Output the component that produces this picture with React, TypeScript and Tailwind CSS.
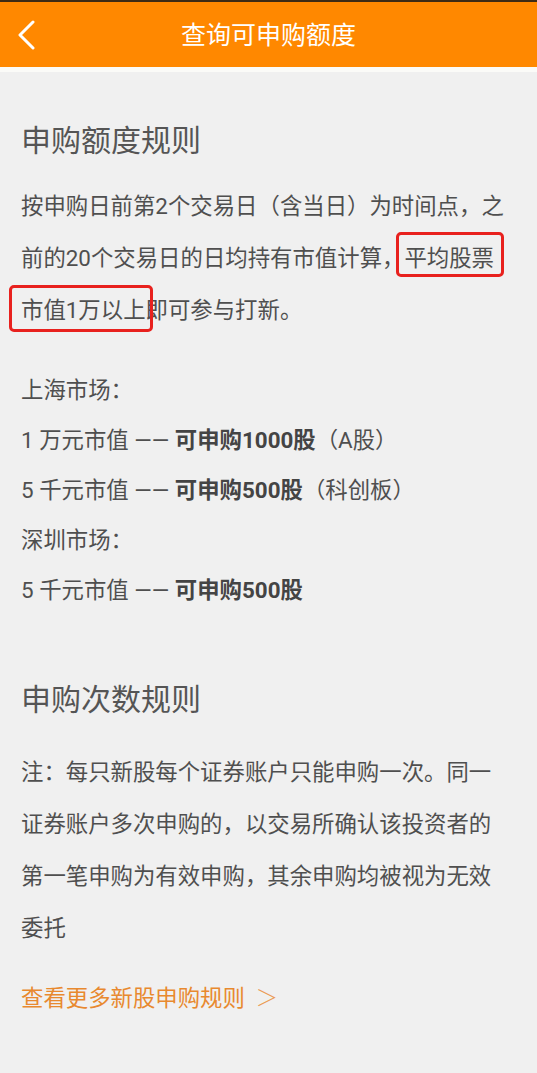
import React from 'react';

function Marked({ children, box }: { children: React.ReactNode; box: string }) {
  return (
    <span className="relative">
      {children}
      <span className={`pointer-events-none absolute rounded-[5px] border-[3px] border-[#e8211e] ${box}`} />
    </span>
  );
}

function BackIcon() {
  return (
    <svg width="18" height="30" viewBox="0 0 18 30" fill="none">
      <polyline points="16,2 3,15 16,28" stroke="#fff" strokeWidth="3" strokeLinecap="round" strokeLinejoin="round" />
    </svg>
  );
}

export default function App() {
  return (
    <div className="flex h-[1073px] flex-col bg-[#f0f0f0] font-[Roboto,'Noto_Sans_CJK_SC',sans-serif] text-[#4f4f4f]">
      <header className="grid h-[67px] shrink-0 grid-cols-[70px_1fr_70px] items-center border-t-2 border-[#3d2a14] bg-[#ff8800]">
        <button className="flex h-full items-center pl-[17px]">
          <BackIcon />
        </button>
        <h1 className="pt-[3px] text-center text-[25px] leading-[32px] text-white">查询可申购额度</h1>
        <div />
      </header>
      <div className="h-[5px] shrink-0 bg-[#fbfbf8]" />

      <main className="flex-1 pl-[21px] pr-[27px] pt-[49px] text-[22.4px]">
        <h2 className="text-[30px] leading-[40px] text-[#555]">申购额度规则</h2>
        <p className="mt-[19px] whitespace-nowrap leading-[52px]">
          按申购日前第2个交易日（含当日）为时间点，之
          <br />
          前的20个交易日的日均持有市值计算，
          <Marked box="-left-[8px] -right-[10px] -top-[13px] -bottom-[6px]">平均股票</Marked>
          <br />
          <Marked box="-left-[12px] -right-[7px] -top-[12px] -bottom-[9px]">市值1万以上</Marked>
          即可参与打新。
        </p>

        <div className="mt-[29px] whitespace-pre leading-[50px]">
          <div>上海市场：</div>
          <div>
            1 万元市值 —— <b className="font-bold text-[#444]">可申购1000股</b>（A股）
          </div>
          <div>
            5 千元市值 —— <b className="font-bold text-[#444]">可申购500股</b>（科创板）
          </div>
          <div>深圳市场：</div>
          <div>
            5 千元市值 —— <b className="font-bold text-[#444]">可申购500股</b>
          </div>
        </div>

        <h2 className="mt-[65px] text-[30px] leading-[40px] text-[#555]">申购次数规则</h2>
        <p className="mt-[26px] whitespace-nowrap leading-[52px]">
          注：每只新股每个证券账户只能申购一次。同一
          <br />
          证券账户多次申购的，以交易所确认该投资者的
          <br />
          第一笔申购为有效申购，其余申购均被视为无效
          <br />
          委托
        </p>

        <a className="mt-[16px] block whitespace-pre leading-[52px] text-[#e8892f]">
          查看更多新股申购规则 <span className="ml-[5px] font-['Noto_Sans_CJK_SC',sans-serif] font-light text-[#eb9c55]">＞</span>
        </a>
      </main>
    </div>
  );
}
